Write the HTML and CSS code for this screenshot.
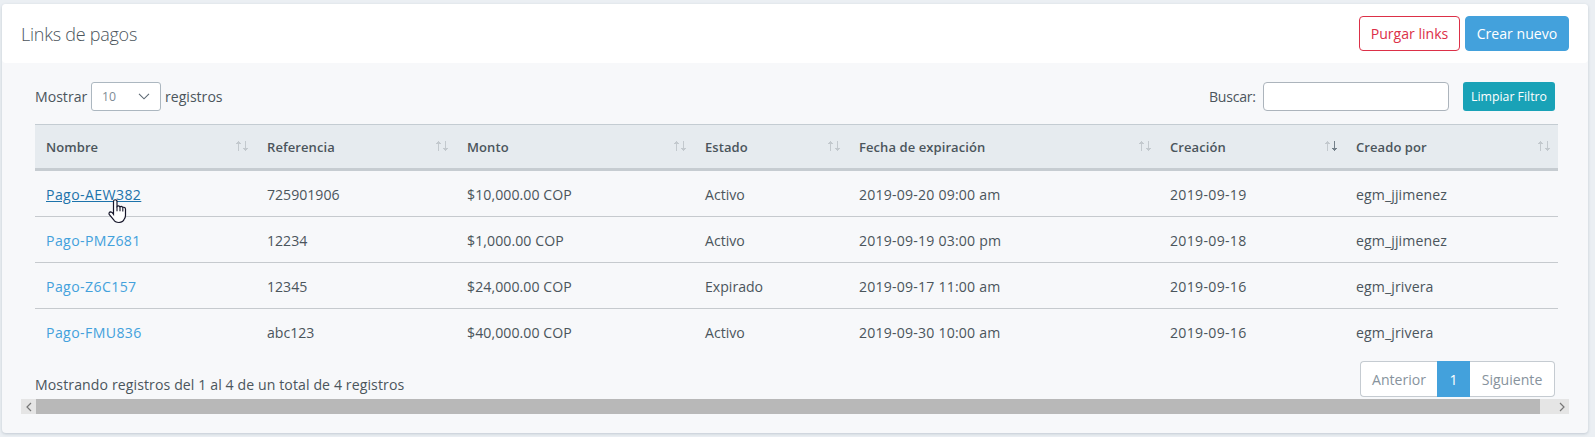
FILE: index.html
```html
<!DOCTYPE html>
<html lang="es">
<head>
<meta charset="utf-8">
<title>Links de pagos</title>
<link rel="stylesheet" href="styles.css">
</head>
<body>
<svg width="0" height="0" class="defs" aria-hidden="true">
  <symbol id="up" viewBox="0 0 5 10"><path d="M2 0h1v1h1v1h1v1H3v7H2V3H0V2h1V1h1z"/></symbol>
  <symbol id="down" viewBox="0 0 5 10"><path d="M2 10h1V9h1V8h1V7H3V0H2v7H0v1h1v1h1z"/></symbol>
</svg>
<main class="card">
  <header class="card-header">
    <h1 class="title">Links de pagos</h1>
    <div class="actions">
      <button class="btn btn-outline"><span>Purgar links</span></button>
      <button class="btn btn-primary"><span>Crear nuevo</span></button>
    </div>
  </header>
  <section class="card-body">
    <div class="toolbar">
      <div class="length"><span class="mostrar">Mostrar</span>
        <div class="select"><span>10</span><svg width="12" height="7" viewBox="0 0 12 7"><path d="M1 .8l5 5 5-5" fill="none" stroke="#5c6873" stroke-width="1.1"/></svg></div>
        <span class="registros">registros</span></div>
      <div class="search"><label for="q">Buscar:</label><input id="q" class="search-input" type="text"><button class="btn-clear">Limpiar Filtro</button></div>
    </div>
    <table class="table">
      <colgroup><col class="c1"><col class="c2"><col class="c3"><col class="c4"><col class="c5"><col class="c6"><col class="c7"></colgroup>
      <thead><tr>
        <th><div class="th">Nombre<span class="sort"><svg><use href="#up"/></svg><svg><use href="#down"/></svg></span></div></th>
        <th><div class="th">Referencia<span class="sort"><svg><use href="#up"/></svg><svg><use href="#down"/></svg></span></div></th>
        <th><div class="th">Monto<span class="sort"><svg><use href="#up"/></svg><svg><use href="#down"/></svg></span></div></th>
        <th><div class="th">Estado<span class="sort"><svg><use href="#up"/></svg><svg><use href="#down"/></svg></span></div></th>
        <th><div class="th">Fecha de expiración<span class="sort"><svg><use href="#up"/></svg><svg><use href="#down"/></svg></span></div></th>
        <th><div class="th">Creación<span class="sort"><svg><use href="#up"/></svg><svg class="on"><use href="#down"/></svg></span></div></th>
        <th><div class="th">Creado por<span class="sort"><svg><use href="#up"/></svg><svg><use href="#down"/></svg></span></div></th>
      </tr></thead>
      <tbody>
        <tr><td><a class="link hover">Pago-AEW382</a></td><td>725901906</td><td class="money">$10,000.00 COP</td><td>Activo</td><td class="date">2019-09-20 09:00 am</td><td class="date day">2019-09-19</td><td class="user">egm_jjimenez</td></tr>
        <tr><td><a class="link">Pago-PMZ681</a></td><td>12234</td><td class="money">$1,000.00 COP</td><td>Activo</td><td class="date">2019-09-19 03:00 pm</td><td class="date day">2019-09-18</td><td class="user">egm_jjimenez</td></tr>
        <tr><td><a class="link">Pago-Z6C157</a></td><td>12345</td><td class="money">$24,000.00 COP</td><td>Expirado</td><td class="date">2019-09-17 11:00 am</td><td class="date day">2019-09-16</td><td class="user">egm_jrivera</td></tr>
        <tr><td><a class="link">Pago-FMU836</a></td><td>abc123</td><td class="money">$40,000.00 COP</td><td>Activo</td><td class="date">2019-09-30 10:00 am</td><td class="date day">2019-09-16</td><td class="user">egm_jrivera</td></tr>
      </tbody>
    </table>
    <div class="footer">
      <div class="info">Mostrando registros del 1 al 4 de un total de 4 registros</div>
      <nav class="pages"><a class="page prev">Anterior</a><a class="page current">1</a><a class="page next">Siguiente</a></nav>
    </div>
    <div class="scrollbar">
      <span class="arrow"><svg width="6" height="10" viewBox="0 0 6 10"><path d="M5 1L1 5l4 4"/></svg></span>
      <span class="thumb"></span>
      <span class="arrow"><svg width="6" height="10" viewBox="0 0 6 10"><path d="M1 1l4 4-4 4"/></svg></span>
    </div>
  </section>
</main>
<svg class="cursor" width="19" height="25" viewBox="0 0 19 25"><path d="M5.500 15.200V2.500a1.750 1.750 0 0 1 3.500 0V7.500q1.500-1.200 3 .3 1.500-.9 2.800.6 2.400-.7 2.700 1.600v6.500q0 2-1.500 4-.8 2.500-5 3-4 0-5.500-3L1.200 15.500q-.8-2.300 1.500-2.600 1.500.2 2.800 2.300z" fill="#fff" stroke="#16162a" stroke-width="1.200"/><path d="M9 7.500v4.800M12 7.800v4.500M14.800 8.600v4" stroke="#16162a" stroke-width="1.100"/></svg>
</body>
</html>
```
FILE: styles.css
```css
* { box-sizing: border-box; }
body {
  margin: 0;
  padding: 4px 7px 4px 2px;
  height: 437px;
  overflow: hidden;
  background: #ebeff3;
  color: #4b555c;
  font: 14.1px/20px "Open Sans", "Noto Sans", sans-serif;
}
.defs { position: absolute; }
.card {
  height: 429px;
  background: #f7f8fa;
  border-radius: 4px;
  box-shadow: 0 1px 3px rgba(70, 90, 110, .25);
}
.card-header {
  display: flex;
  align-items: center;
  justify-content: space-between;
  height: 59px;
  padding: 0 19px 0 19px;
  background: #fff;
  border-radius: 4px;
}
.title { margin: 0; font-size: 18px; line-height: 24px; font-weight: 300; letter-spacing: -.25px; }
.actions { display: flex; gap: 5px; }
.btn {
  height: 35px;
  padding: 0;
  border: 1px solid;
  border-radius: 4px;
  font: inherit;
  line-height: 20px;
}
.btn-outline { width: 101px; color: #dc3048; background: #fff; border-color: #dc3048; }
.btn-primary { width: 104px; color: #fff; background: #43a1dc; border-color: #43a1dc; }
.card-body { padding: 19px 19px 0; }
.toolbar, .footer { display: flex; justify-content: space-between; padding: 0 14px; }
.length, .search { display: flex; align-items: center; height: 29px; }
.mostrar { width: 56px; }
.registros { margin-left: 4px; }
.select {
  display: flex;
  align-items: center;
  justify-content: space-between;
  width: 70px;
  height: 29px;
  padding: 0 10px;
  font-size: 12.3px;
  color: #7f8c96;
  background: #fff;
  border: 1px solid #acb7c0;
  border-radius: 3px;
}
.search label { width: 54px; letter-spacing: -.25px; }
.search-input { width: 186px; height: 29px; border: 1px solid #acb4bc; border-radius: 4px; background: #fff; }
.btn-clear {
  width: 92px;
  height: 29px;
  margin-left: 14px;
  padding: 0;
  border: 0;
  border-radius: 3px;
  background: #19a2b7;
  color: #fff;
  font: 12.3px/18px "Open Sans", sans-serif;
}
.table {
  width: 1523px;
  margin: 13px 0 0 14px;
  table-layout: fixed;
  border-collapse: separate;
  border-spacing: 0;
}
.c1 { width: 221px; }
.c2 { width: 200px; }
.c3 { width: 238px; }
.c4 { width: 154px; }
.c5 { width: 311px; }
.c6 { width: 186px; }
.c7 { width: 213px; }
.table th {
  height: 47px;
  padding: 0 8px 0 11px;
  background: #e6ebef;
  border-top: 1px solid #c4ccd2;
  border-bottom: 3px solid #c6ccd1;
  font-size: 13px;
  font-weight: 600;
  letter-spacing: .08px;
  text-align: left;
}
.th { display: flex; align-items: center; justify-content: space-between; }
.sort { display: flex; gap: 2px; margin-top: -2px; }
.sort svg { width: 5px; height: 10px; fill: #c3c9ce; }
.sort .on { fill: #74808a; }
.table td { height: 46px; padding: 2px 11px 0; border-bottom: 1px solid #c6cace; white-space: nowrap; }
.table tr:last-child td { border-bottom: 0; }
.table .date { letter-spacing: .2px; }
.table .day { letter-spacing: .3px; }
.table .user { letter-spacing: .12px; }
.table .money { letter-spacing: .08px; }
.link { color: #43a1dc; letter-spacing: .4px; }
.link.hover { color: #1d73ab; text-decoration: underline; }
.footer { height: 44px; padding-top: 6px; }
.info { padding-top: 14px; letter-spacing: .1px; }
.pages { display: flex; height: 36px; }
.page {
  display: flex;
  align-items: center;
  justify-content: center;
  padding-top: 1px;
  border: 1px solid #c5cbd1;
  background: #fff;
  color: #87939d;
}
.prev { width: 77px; border-right: 0; border-radius: 4px 0 0 4px; }
.current { width: 33px; background: #43a1dc; border-color: #43a1dc; color: #fff; }
.next { width: 85px; border-left: 0; border-radius: 0 4px 4px 0; }
.scrollbar { display: flex; height: 15px; background: #e5e5e5; }
.thumb { width: 1504px; margin-right: 14px; background: #b8b8b8; }
.arrow { display: flex; align-items: center; justify-content: center; width: 15px; }
.arrow path { fill: none; stroke: #777; stroke-width: 1.2; }
.cursor { position: absolute; left: 108px; top: 199px; }
```
